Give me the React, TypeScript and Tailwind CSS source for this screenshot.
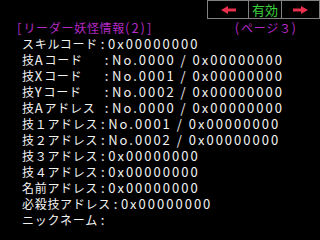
import React from "react";

const A = ({ children }: { children: React.ReactNode }) => (
  <span className="text-[13px] tracking-[2px]">{children}</span>
);

const Colon = () => (
  <span className="inline-block w-[10px] text-center text-[13px]">:</span>
);

const Hex = () => <A>0x00000000</A>;

const Arrow = ({ dir }: { dir: "left" | "right" }) => (
  <svg
    width="15"
    height="8"
    viewBox="0 0 15 8"
    className={dir === "right" ? "-scale-x-100" : ""}
  >
    <polygon points="0,4 7,0 7,8" fill="#e8304c" />
    <rect x="6" y="2.5" width="9" height="3" fill="#e8304c" />
  </svg>
);

const rows: { label: string; fixed?: boolean; no?: string }[] = [
  { label: "スキルコード" },
  { label: "技Aコード", fixed: true, no: "0000" },
  { label: "技Xコード", fixed: true, no: "0001" },
  { label: "技Yコード", fixed: true, no: "0002" },
  { label: "技Aアドレス", fixed: true, no: "0000" },
  { label: "技１アドレス", no: "0001" },
  { label: "技２アドレス", no: "0002" },
  { label: "技３アドレス" },
  { label: "技４アドレス" },
  { label: "名前アドレス" },
  { label: "必殺技アドレス" },
];

export default function App() {
  return (
    <div
      className="w-[320px] h-[240px] bg-black text-[#f2f2f2] overflow-hidden text-[12px] tracking-[0.7px]"
      style={{ fontFamily: '"Noto Sans CJK JP", "Noto Sans", sans-serif' }}
    >
      {/* top bar */}
      <div className="flex justify-end h-[19px]">
        <div className="flex w-[113px]">
          <div className="w-[42px] border border-[#808080] flex items-center justify-center">
            <Arrow dir="left" />
          </div>
          <div className="w-[32px] border-y border-[#808080] flex items-center justify-center text-[13px] text-[#3cd23c] tracking-[0px]">
            有効
          </div>
          <div className="w-[39px] border border-[#808080] flex items-center justify-center">
            <Arrow dir="right" />
          </div>
        </div>
      </div>

      {/* header */}
      <div className="flex h-4 items-center mt-[1px] text-[#b52ac6] whitespace-pre">
        <span className="pl-[17px]">
          <A>[</A>リーダー妖怪情報<A>(2)]</A>
        </span>
        <span className="ml-auto mr-[22px]">
          <A>(</A>ページ３<A>)</A>
        </span>
      </div>

      {/* rows */}
      <div className="pl-[22px]">
        {rows.map((r) => (
          <div key={r.label} className="flex h-4 items-center whitespace-pre">
            <span className={r.fixed ? "inline-block w-[80px]" : ""}>
              {r.label.split(/([A-Z])/).map((p, i) =>
                /^[A-Z]$/.test(p) ? <A key={i}>{p}</A> : <span key={i}>{p}</span>
              )}
            </span>
            <Colon />
            {r.no ? (
              <>
                <A>No.{r.no}</A>
                <A> / </A>
                <Hex />
              </>
            ) : (
              <Hex />
            )}
          </div>
        ))}
        <div className="flex h-4 items-center whitespace-pre">
          <span>ニックネーム</span>
          <Colon />
        </div>
      </div>
    </div>
  );
}
